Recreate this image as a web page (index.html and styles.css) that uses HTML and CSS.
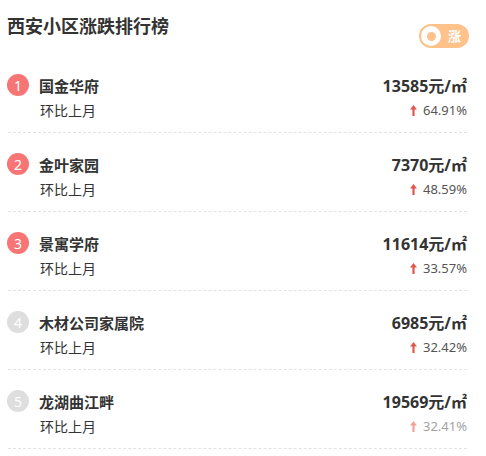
FILE: index.html
```html
<!DOCTYPE html>
<html lang="zh">
<head>
<meta charset="utf-8">
<link rel="stylesheet" href="styles.css">
</head>
<body>
<div class="board">
  <div class="header">
    <h1 class="title">西安小区涨跌排行榜</h1>
    <div class="toggle"><span class="knob"><span class="dot"></span></span><span class="toggle-text">涨</span></div>
  </div>
  <ul class="list">
    <li class="row">
      <div class="line">
        <span class="rank hot">1</span>
        <span class="name">国金华府</span>
        <span class="price">13585元/㎡</span>
      </div>
      <div class="line sub">
        <span class="label">环比上月</span>
        <span class="pct"><svg class="arrow" viewBox="0 0 7 11"><path d="M3.5 0 L7 4.5 H4.6 V11 H2.4 V4.5 H0 Z"/></svg>64.91%</span>
      </div>
    </li>
    <li class="row">
      <div class="line">
        <span class="rank hot">2</span>
        <span class="name">金叶家园</span>
        <span class="price">7370元/㎡</span>
      </div>
      <div class="line sub">
        <span class="label">环比上月</span>
        <span class="pct"><svg class="arrow" viewBox="0 0 7 11"><path d="M3.5 0 L7 4.5 H4.6 V11 H2.4 V4.5 H0 Z"/></svg>48.59%</span>
      </div>
    </li>
    <li class="row">
      <div class="line">
        <span class="rank hot">3</span>
        <span class="name">景寓学府</span>
        <span class="price">11614元/㎡</span>
      </div>
      <div class="line sub">
        <span class="label">环比上月</span>
        <span class="pct"><svg class="arrow" viewBox="0 0 7 11"><path d="M3.5 0 L7 4.5 H4.6 V11 H2.4 V4.5 H0 Z"/></svg>33.57%</span>
      </div>
    </li>
    <li class="row">
      <div class="line">
        <span class="rank">4</span>
        <span class="name">木材公司家属院</span>
        <span class="price">6985元/㎡</span>
      </div>
      <div class="line sub">
        <span class="label">环比上月</span>
        <span class="pct"><svg class="arrow" viewBox="0 0 7 11"><path d="M3.5 0 L7 4.5 H4.6 V11 H2.4 V4.5 H0 Z"/></svg>32.42%</span>
      </div>
    </li>
    <li class="row">
      <div class="line">
        <span class="rank">5</span>
        <span class="name">龙湖曲江畔</span>
        <span class="price">19569元/㎡</span>
      </div>
      <div class="line sub">
        <span class="label">环比上月</span>
        <span class="pct fade"><svg class="arrow" viewBox="0 0 7 11"><path d="M3.5 0 L7 4.5 H4.6 V11 H2.4 V4.5 H0 Z"/></svg>32.41%</span>
      </div>
    </li>
  </ul>
</div>
</body>
</html>
```
FILE: styles.css
```css
* { box-sizing: border-box; }
html, body { margin: 0; padding: 0; background: #fff; }
body {
  font-family: "Noto Sans", "Noto Sans CJK SC", sans-serif;
  color: #333;
}
.board {
  width: 467px;
  padding-left: 8px;
}
.header {
  height: 54px;
  display: flex;
  justify-content: space-between;
  align-items: flex-start;
}
.title {
  margin: 14px 0 0 -1px;
  font-size: 18px;
  line-height: 24px;
  font-weight: 700;
  color: #333;
}
.toggle {
  margin-top: 24px;
  margin-right: -2px;
  width: 50px;
  height: 24px;
  border-radius: 12px;
  background: #fec28a;
  display: flex;
  align-items: center;
  padding-left: 2px;
  gap: 7px;
}
.knob {
  width: 20px;
  height: 20px;
  border-radius: 50%;
  background: #fff;
  display: flex;
  align-items: center;
  justify-content: center;
}
.dot {
  width: 9px;
  height: 9px;
  border-radius: 50%;
  background: #fec28a;
}
.toggle-text {
  color: #fff;
  font-size: 13px;
  font-weight: 700;
  line-height: 1;
}
.list {
  list-style: none;
  margin: 0;
  padding: 0;
}
.row {
  padding: 20px 0 12px;
  border-bottom: 1px dashed #e3e3e3;
  display: flex;
  flex-direction: column;
  gap: 4px;
}
.line {
  display: flex;
  align-items: center;
  height: 22px;
}
.line.sub {
  height: 20px;
  padding-left: 32px;
}
.rank {
  width: 22px;
  height: 22px;
  border-radius: 50%;
  background: #dedede;
  color: #fff;
  font-size: 14px;
  display: flex;
  align-items: center;
  justify-content: center;
  margin-right: 10px;
  margin-left: -1px;
  flex: none;
}
.rank.hot { background: #f87575; }
.name {
  font-size: 15px;
  font-weight: 700;
  color: #333;
  flex: 1;
}
.price {
  font-size: 16px;
  font-weight: 700;
  color: #333;
}
.label {
  font-size: 14px;
  color: #333;
  flex: 1;
}
.pct {
  font-size: 13px;
  color: #555;
  display: flex;
  align-items: center;
}
.arrow {
  width: 7px;
  height: 11px;
  fill: #e2574c;
  margin-right: 6px;
}
.fade { opacity: 0.55; }
```
